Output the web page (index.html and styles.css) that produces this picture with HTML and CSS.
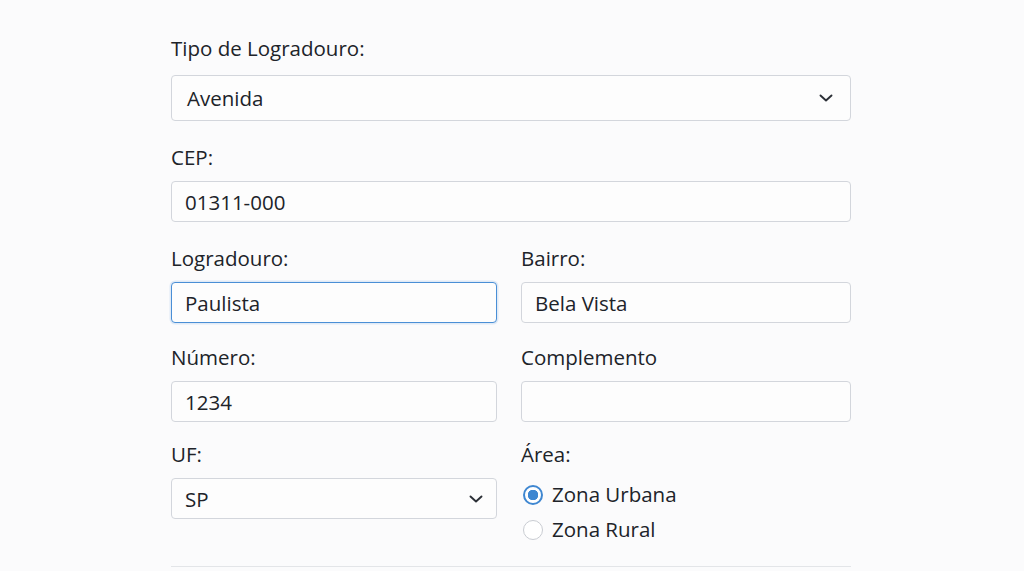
FILE: index.html
```html
<!DOCTYPE html>
<html lang="pt-BR">
<head>
<meta charset="utf-8">
<title>Endereço</title>
<link rel="stylesheet" href="styles.css">
</head>
<body>
<form class="form">
  <div class="field first">
    <label class="label">Tipo de Logradouro:</label>
    <div class="control select big">
      <span class="value">Avenida</span>
      <svg class="chev" viewBox="0 0 16 16" width="16" height="16"><path d="M2.5 5.5 L8 10.5 L13.5 5.5" fill="none" stroke="#2b2f36" stroke-width="1.9" stroke-linecap="round" stroke-linejoin="round"/></svg>
    </div>
  </div>
  <div class="field">
    <label class="label">CEP:</label>
    <div class="control"><span class="value">01311-000</span></div>
  </div>
  <div class="row tight">
    <div class="field">
      <label class="label">Logradouro:</label>
      <div class="control focus"><span class="value">Paulista</span></div>
    </div>
    <div class="field">
      <label class="label">Bairro:</label>
      <div class="control"><span class="value">Bela Vista</span></div>
    </div>
  </div>
  <div class="row tighter">
    <div class="field">
      <label class="label">Número:</label>
      <div class="control"><span class="value">1234</span></div>
    </div>
    <div class="field">
      <label class="label">Complemento</label>
      <div class="control"><span class="value"></span></div>
    </div>
  </div>
  <div class="row">
    <div class="field">
      <label class="label">UF:</label>
      <div class="control select small">
        <span class="value">SP</span>
        <svg class="chev" viewBox="0 0 16 16" width="16" height="16"><path d="M2.5 5.5 L8 10.5 L13.5 5.5" fill="none" stroke="#2b2f36" stroke-width="1.9" stroke-linecap="round" stroke-linejoin="round"/></svg>
      </div>
    </div>
    <div class="field">
      <label class="label">Área:</label>
      <div class="radios">
        <div class="radio-item"><span class="radio checked"></span><span class="radio-text">Zona Urbana</span></div>
        <div class="radio-item"><span class="radio"></span><span class="radio-text">Zona Rural</span></div>
      </div>
    </div>
  </div>
  <div class="divider"></div>
</form>
</body>
</html>
```
FILE: styles.css
```css
html, body {
  margin: 0;
  padding: 0;
  background: #fbfbfc;
}
body {
  font-family: "Open Sans", "Noto Sans", sans-serif;
  color: #202329;
}
.form {
  width: 680px;
  margin: 0 0 0 171px;
  padding-top: 34px;
  display: flex;
  flex-direction: column;
}
.field {
  display: flex;
  flex-direction: column;
  margin-bottom: 22px;
}
.row.tight .field {
  margin-bottom: 20px;
}
.row.tighter .field {
  margin-bottom: 18px;
}
.label {
  font-size: 20.5px;
  line-height: 28px;
  margin-bottom: 10px;
}
.field.first .label {
  margin-bottom: 13px;
}
.control {
  box-sizing: border-box;
  height: 41px;
  border: 1px solid #d3d6dc;
  border-radius: 4px;
  background: #fdfdfd;
  display: flex;
  align-items: center;
  padding: 0 13px;
  font-size: 20.5px;
}
.control.big {
  height: 46px;
  padding-left: 15px;
  padding-right: 16px;
}
.control.small {
  padding-right: 12px;
}
.control.focus {
  border: 1.5px solid #4a8fd6;
  box-shadow: 0 0 0 1.5px rgba(74, 143, 214, 0.15);
}
.value {
  flex: 1;
}
.select .chev {
  flex: none;
}
.row {
  display: grid;
  grid-template-columns: 326px 330px;
  column-gap: 24px;
}
.radios {
  display: flex;
  flex-direction: column;
  gap: 12px;
  padding-top: 5px;
}
.radio-item {
  display: flex;
  align-items: center;
  gap: 9px;
  font-size: 20.5px;
  line-height: 23px;
}
.radio {
  box-sizing: border-box;
  width: 20px;
  height: 20px;
  border-radius: 50%;
  border: 1px solid #c9ccd2;
  background: #fff;
  margin-left: 2px;
}
.radio.checked {
  border: 2px solid #3f87d1;
  background: radial-gradient(circle, #3f87d1 0 5px, #fff 5.5px);
}
.divider {
  height: 1px;
  background: #e3e5e8;
  margin-top: 3px;
}
```
